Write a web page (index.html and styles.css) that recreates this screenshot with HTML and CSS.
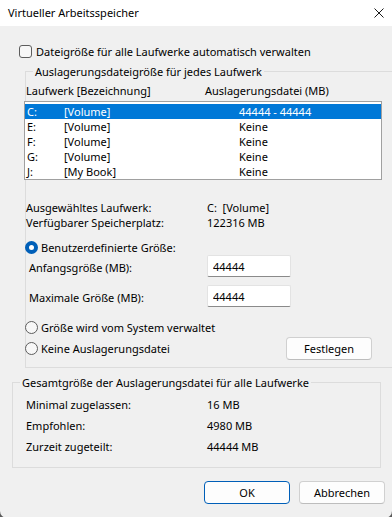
FILE: index.html
```html
<!DOCTYPE html>
<html lang="de">
<head>
    <meta charset="UTF-8">
    <meta name="viewport" content="width=device-width, initial-scale=1.0">
    <title>Virtueller Arbeitsspeicher</title>
    <link rel="stylesheet" href="styles.css">
</head>
<body>
    <div class="window">
        <div class="titlebar">
            <span class="title">Virtueller Arbeitsspeicher</span>
            <svg class="close" width="10" height="10" viewBox="0 0 10 10">
                <path d="M0.5 0.5 L9.5 9.5 M9.5 0.5 L0.5 9.5" stroke="#1b1b1b" stroke-width="1" fill="none"/>
            </svg>
        </div>

        <div class="dialog">
            <div class="check-row">
                <span class="checkbox"></span>
                <span>Dateigröße für alle Laufwerke automatisch verwalten</span>
            </div>

            <fieldset class="group group-drives">
                <legend>Auslagerungsdateigröße für jedes Laufwerk</legend>

                <div class="list-head">
                    <span>Laufwerk [Bezeichnung]</span>
                    <span>Auslagerungsdatei (MB)</span>
                </div>

                <div class="drive-list">
                    <div class="drive-row selected"><span>C:</span><span>[Volume]</span><span>44444 - 44444</span></div>
                    <div class="drive-row"><span>E:</span><span>[Volume]</span><span>Keine</span></div>
                    <div class="drive-row"><span>F:</span><span>[Volume]</span><span>Keine</span></div>
                    <div class="drive-row"><span>G:</span><span>[Volume]</span><span>Keine</span></div>
                    <div class="drive-row"><span>J:</span><span>[My Book]</span><span>Keine</span></div>
                </div>

                <div class="info-grid">
                    <span>Ausgewähltes Laufwerk:</span><span>C:&nbsp; [Volume]</span>
                    <span>Verfügbarer Speicherplatz:</span><span>122316 MB</span>
                </div>

                <div class="radio-row custom">
                    <span class="radio checked"></span>
                    <span>Benutzerdefinierte Größe:</span>
                </div>

                <div class="field-row first">
                    <label for="initialSize">Anfangsgröße (MB):</label>
                    <input type="text" id="initialSize" value="44444">
                </div>

                <div class="field-row second">
                    <label for="maxSize">Maximale Größe (MB):</label>
                    <input type="text" id="maxSize" value="44444">
                </div>

                <div class="radio-row system">
                    <span class="radio"></span>
                    <span>Größe wird vom System verwaltet</span>
                </div>

                <div class="set-row">
                    <div class="radio-row">
                        <span class="radio"></span>
                        <span>Keine Auslagerungsdatei</span>
                    </div>
                    <button class="btn">Festlegen</button>
                </div>
            </fieldset>

            <fieldset class="group group-total">
                <legend>Gesamtgröße der Auslagerungsdatei für alle Laufwerke</legend>
                <div class="total-grid">
                    <span>Minimal zugelassen:</span><span>16 MB</span>
                    <span>Empfohlen:</span><span>4980 MB</span>
                    <span>Zurzeit zugeteilt:</span><span>44444 MB</span>
                </div>
            </fieldset>

            <div class="buttons">
                <button class="btn default">OK</button>
                <button class="btn">Abbrechen</button>
            </div>
        </div>
    </div>
</body>
</html>
```

FILE: styles.css
```css
html, body {
    margin: 0;
    padding: 0;
}
body {
    background-color: #5a5a5a;
    font-family: "Noto Sans", "DejaVu Sans", sans-serif;
    font-size: 11px;
    line-height: 15px;
    color: #000;
    overflow: hidden;
}
.window {
    width: 392px;
    height: 518px;
    background-color: #f0f0f0;
    border-radius: 0 0 7px 7px;
    overflow: hidden;
}
.titlebar {
    height: 26px;
    background-color: #fff;
    display: flex;
    align-items: center;
    justify-content: space-between;
    padding: 0 8px 2px 8px;
    box-sizing: border-box;
}
.title {
    font-size: 11px;
}
.close {
    margin-right: 0;
    margin-top: 1px;
}
.dialog {
    padding-top: 18px;
}
.check-row {
    display: flex;
    align-items: center;
    margin-left: 19px;
    height: 15px;
}
.checkbox {
    width: 11px;
    height: 11px;
    border: 1px solid #5d5d5d;
    border-radius: 3px;
    background-color: #f7f7f7;
    margin-right: 4px;
}

/* group boxes */
.group {
    border: 1px solid #dcdcdc;
    padding: 0;
    min-width: 0;
}
.group legend {
    padding: 0 2px;
    line-height: 15px;
}
.group-drives {
    margin: 5px -3px 0 25px;
    padding-bottom: 7px;
}
.group-drives legend {
    margin-left: 7px;
}
.list-head {
    display: grid;
    grid-template-columns: 179px auto;
    margin-top: 4px;
}
.drive-list {
    margin: 3px 0 0 -2px;
    width: 356px;
    border: 1px solid #a0a0a0;
    background-color: #fff;
    padding-top: 2px;
}
.drive-row {
    display: grid;
    grid-template-columns: 37px 175px auto;
    height: 15px;
    padding-left: 2px;
}
.drive-row.selected {
    background-color: #0078d7;
    color: #fff;
}
.info-grid {
    display: grid;
    grid-template-columns: 181px auto;
    margin-top: 20px;
}
.radio-row {
    display: flex;
    align-items: center;
    height: 15px;
    margin-left: -1px;
}
.radio-row.custom {
    margin-top: 10px;
}
.radio-row.system {
    margin-top: 13px;
}
.radio {
    width: 11px;
    height: 11px;
    border: 1px solid #5d5d5d;
    border-radius: 50%;
    background-color: #f7f7f7;
    margin-right: 3px;
    box-sizing: content-box;
}
.radio.checked {
    width: 5px;
    height: 5px;
    border: 4px solid #005fb8;
    background-color: #fff;
}
.field-row {
    display: grid;
    grid-template-columns: 181px 84px;
    align-items: center;
}
.field-row label {
    padding: 3px 0 0 3px;
}
.field-row.second {
    margin-top: 8px;
}
.field-row input {
    width: 84px;
    height: 22px;
    box-sizing: border-box;
    border: 1px solid #e3e3e3;
    border-bottom-color: #8a8a8a;
    border-radius: 2px;
    padding: 0 5px;
    font-family: inherit;
    font-size: 11px;
    color: #000;
    background-color: #fff;
    outline: none;
}
.set-row {
    display: grid;
    grid-template-columns: 260px 86px;
    align-items: center;
    margin-top: 2px;
}

/* buttons */
.btn {
    width: 86px;
    height: 23px;
    box-sizing: border-box;
    background-color: #fdfdfd;
    border: 1px solid #d0d0d0;
    border-bottom-color: #bdbdbd;
    border-radius: 4px;
    font-family: inherit;
    font-size: 11px;
    color: #000;
    padding: 0;
}
.btn.default {
    border-color: #005fb8;
}
.group-total {
    margin: 7px 11px 0 12px;
    padding-bottom: 10px;
}
.group-total legend {
    margin-left: 7px;
}
.total-grid {
    display: grid;
    grid-template-columns: 181px auto;
    grid-auto-rows: 21px;
    align-items: center;
    margin-top: 4px;
    padding-left: 13px;
}
.buttons {
    display: flex;
    justify-content: flex-end;
    gap: 9px;
    margin: 13px 7px 0 0;
}
```
